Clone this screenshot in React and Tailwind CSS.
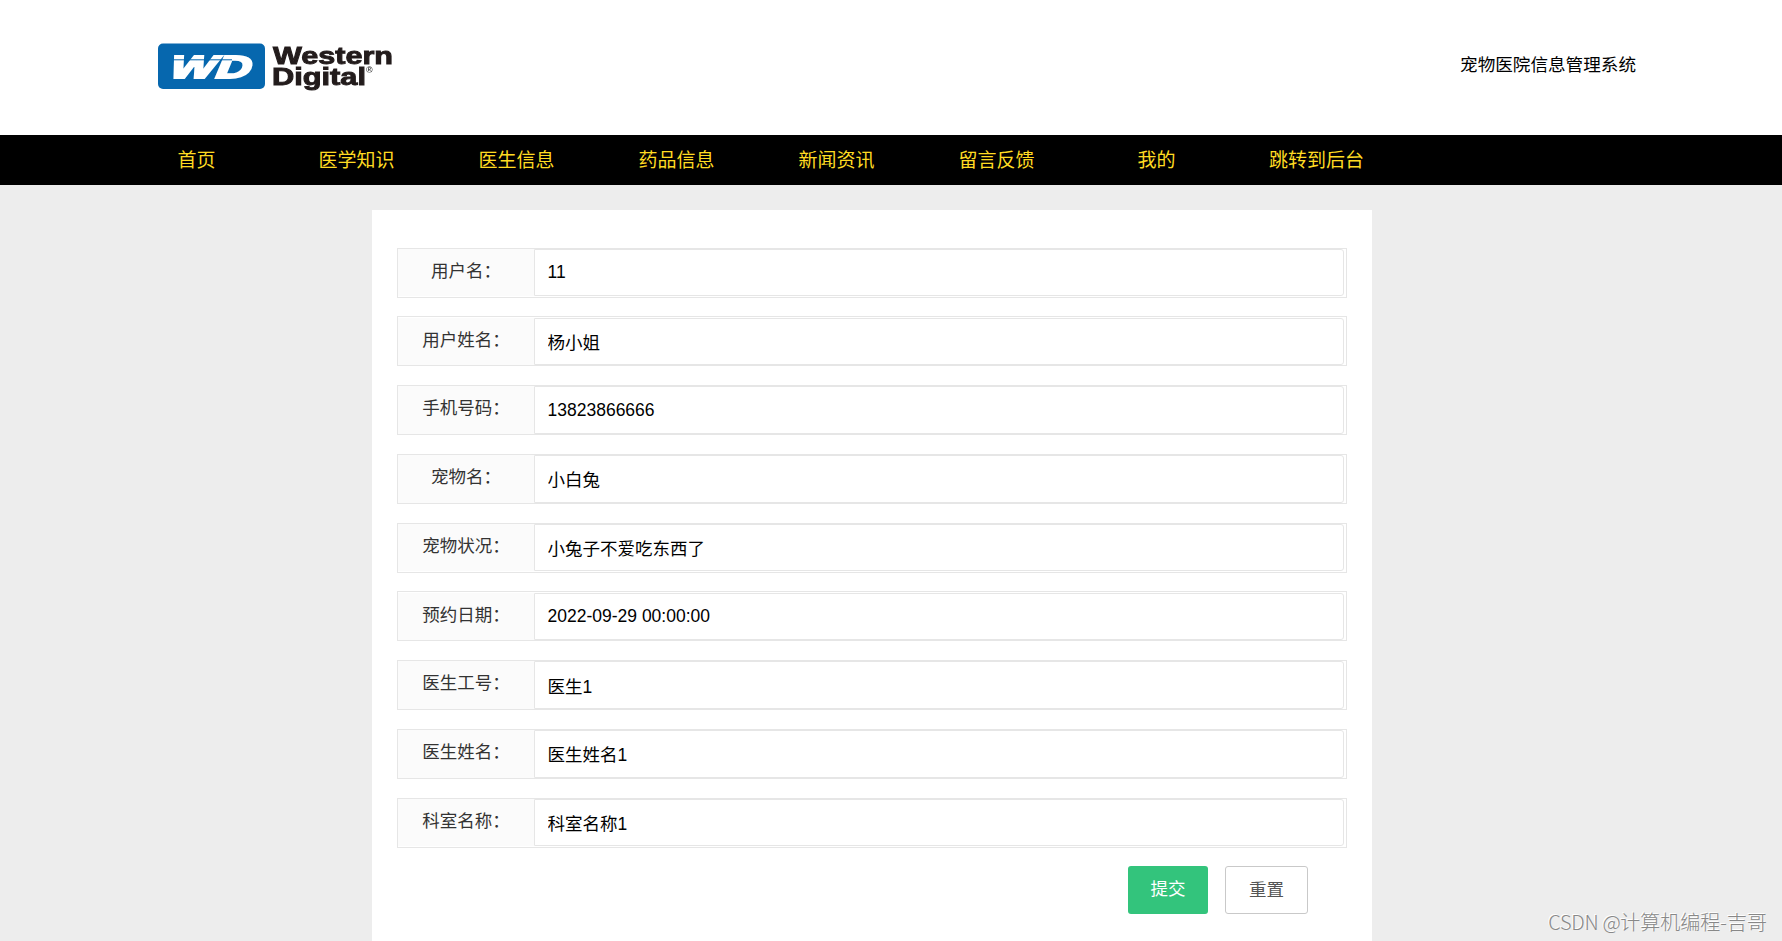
const navItems = ['首页', '医学知识', '医生信息', '药品信息', '新闻资讯', '留言反馈', '我的', '跳转到后台'];

const fields = [
  { label: '用户名', value: '11' },
  { label: '用户姓名', value: '杨小姐' },
  { label: '手机号码', value: '13823866666' },
  { label: '宠物名', value: '小白兔' },
  { label: '宠物状况', value: '小兔子不爱吃东西了' },
  { label: '预约日期', value: '2022-09-29 00:00:00' },
  { label: '医生工号', value: '医生1' },
  { label: '医生姓名', value: '医生姓名1' },
  { label: '科室名称', value: '科室名称1' },
];

const Logo = () => (
  <svg width="240" height="50" viewBox="0 0 240 50" className="blur-[0.5px]" fontFamily="Liberation Sans, sans-serif" fontWeight="bold">
    <rect x="0" y="1.5" width="107" height="45.5" rx="5" fill="#0667ae" />
    <g transform="translate(11.5 35.7) skewX(-7)" fill="#fff" stroke="#fff" strokeWidth="2.2">
      <text x="0" y="0" fontSize="32" fontStyle="italic" textLength="81" lengthAdjust="spacingAndGlyphs">WD</text>
    </g>
    <path d="M16 17.8h58" stroke="#0667ae" strokeWidth="1" />
    <g fill="#231c1c" stroke="#231c1c" strokeWidth="0.9">
      <text x="115" y="22" fontSize="23" textLength="120" lengthAdjust="spacingAndGlyphs">Western</text>
      <text x="114" y="43" fontSize="23" textLength="94" lengthAdjust="spacingAndGlyphs">Digital</text>
    </g>
    <text x="208" y="31" fontSize="9" fill="#444">®</text>
  </svg>
);

const Header = () => (
  <header className="flex h-[135px] items-start justify-between bg-white pl-[158px] pr-[146px]">
    <div className="pt-[42px]">
      <Logo />
    </div>
    <div className="pt-[52px] text-[17.6px] leading-[26px] text-black">宠物医院信息管理系统</div>
  </header>
);

const NavBar = () => (
  <nav className="flex h-[50px] bg-black pl-[116.5px]">
    {navItems.map((item) => (
      <a key={item} href="#" className="w-40 text-center text-[19px] leading-[52px] text-[#ffdb22]">
        {item}
      </a>
    ))}
  </nav>
);

const FormRow = ({ label, value }) => (
  <div className="mb-[18.75px] flex h-[50px] border border-[#e6e6e6] pr-[2px] pt-[0.25px]">
    <label className="h-[47.5px] w-[136px] shrink-0 bg-[#fbfbfb] text-center text-[17.5px] leading-[45px] text-[#333]">
      {label}：
    </label>
    <input
      defaultValue={value}
      className="h-[47.5px] min-w-0 flex-1 rounded-r-[3px] border border-[#e6e6e6] bg-white pl-[12.5px] text-[17.5px] text-black outline-none"
    />
  </div>
);

export default function App() {
  return (
    <div className="relative h-[941px] overflow-hidden bg-[#ededed] font-['Liberation_Sans','Noto_Sans_CJK_SC',sans-serif]">
      <Header />
      <NavBar />
      <form className="ml-[372px] mt-[25px] h-[760px] w-[1000px] bg-white px-[25px] pt-[37.6px]">
        {fields.map((field) => (
          <FormRow key={field.label} {...field} />
        ))}
        <div className="flex justify-end gap-[17px] pr-[39px]">
          <button type="button" className="h-12 w-20 rounded-[3px] bg-[#33c47c] pb-[2px] text-[17.5px] text-white">
            提交
          </button>
          <button type="reset" className="h-12 w-[83px] rounded-[3px] border border-[#c9c9c9] bg-white text-[17.5px] text-[#555]">
            重置
          </button>
        </div>
      </form>
      <div className="absolute bottom-[5px] right-[15px] font-['Noto_Sans_CJK_SC',sans-serif] text-[20px] font-light leading-[28px] text-[#888] [text-shadow:-1px_-1px_0_#fff]">
        <span className="tracking-[-0.3px]">CSDN @</span>计算机编程-吉哥
      </div>
    </div>
  );
}
